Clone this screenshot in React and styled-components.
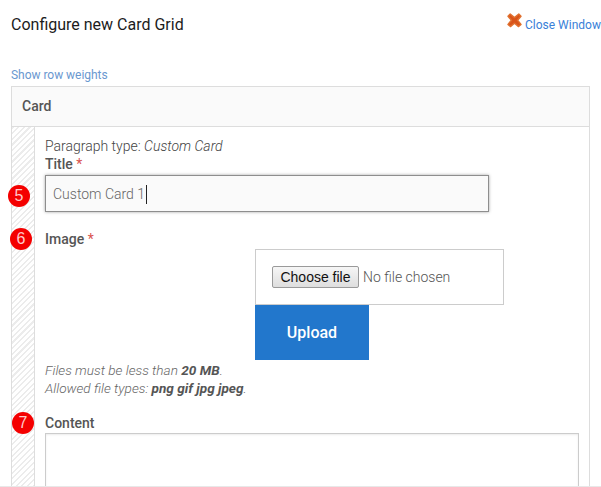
import styled, { createGlobalStyle } from 'styled-components';

const Global = createGlobalStyle`
  html, body {
    margin: 0;
    height: 100%;
    overflow: hidden;
    background: #fff;
  }
  body {
    font-family: Roboto, "Liberation Sans", sans-serif;
    font-size: 14px;
    color: #555;
  }
`;

const Page = styled.div`
  position: relative;
  width: 601px;
  height: 487px;
  overflow: hidden;
  border-bottom: 1px solid #e8e8e8;
  box-sizing: border-box;
`;

const TitleBar = styled.div`
  display: flex;
  justify-content: space-between;
  padding: 15px 0 0 11px;
  height: 52px;
`;

const Heading = styled.h1`
  margin: 0;
  font-size: 16px;
  font-weight: 400;
  line-height: 20px;
  color: #1c1c1c;
`;

const CloseLink = styled.a`
  display: flex;
  align-items: flex-start;
  gap: 3px;
  width: 94px;
  white-space: nowrap;
  font-size: 12px;
  line-height: 18px;
  color: #3a7fd8;
  margin-top: -3px;

  svg {
    flex: none;
    margin-top: 1px;
  }
  span {
    margin-top: 4px;
  }
`;

const WeightsLink = styled.a`
  display: block;
  margin-left: 11px;
  font-size: 12px;
  line-height: 16px;
  height: 19px;
  letter-spacing: -0.03px;
  color: #6a98d0;
`;

const Card = styled.section`
  margin-left: 11px;
  width: 579px;
  height: 420px;
  box-sizing: border-box;
  border: 1px solid #ddd;
  border-bottom: 0;
`;

const CardHeader = styled.div`
  height: 40px;
  box-sizing: border-box;
  padding-left: 10px;
  background: #fafafa;
  border-bottom: 1px solid #ddd;
  font-size: 14px;
  font-weight: 500;
  line-height: 38px;
  color: #555;
`;

const Row = styled.div`
  display: flex;
  height: 380px;
`;

const Handle = styled.div`
  flex: none;
  width: 22px;
  border-right: 1px solid #ddd;
  background: repeating-linear-gradient(
    135deg,
    #ececec 0 1.5px,
    #fff 1.5px 4px
  );
`;

const Body = styled.div`
  flex: 1;
  padding: 10px 0 0 10px;
`;

const TypeLine = styled.div`
  font-size: 14px;
  line-height: 18px;
  font-weight: 300;
  color: #444;

  em {
    font-style: italic;
  }
`;

const Label = styled.label`
  display: block;
  font-size: 14px;
  font-weight: 500;
  line-height: 18px;
  color: #555;

  i {
    font-style: normal;
    color: #d9534f;
    font-weight: 400;
  }
`;

const TitleInput = styled.div`
  margin-top: 2px;
  width: 444px;
  height: 37px;
  box-sizing: border-box;
  padding: 2px 0 0 7px;
  background: #fafafa;
  border: 1px solid #8e8e8e;
  box-shadow: 0 0 3px rgba(0, 0, 0, 0.35);
  font-size: 14px;
  font-weight: 300;
  line-height: 33px;
  color: #666;
  display: flex;
  align-items: center;
`;

const Caret = styled.span`
  display: inline-block;
  width: 1px;
  height: 19px;
  margin-left: 1px;
  background: #222;
`;

const ImageField = styled.div`
  margin-top: 18px;
`;

const Uploader = styled.div`
  margin: 1px 0 0 210px;
  width: 249px;
`;

const FileBox = styled.div`
  display: flex;
  align-items: center;
  height: 56px;
  box-sizing: border-box;
  padding-left: 16px;
  border: 1px solid #ccc;
  font-size: 14px;
  font-weight: 300;
  color: #555;
`;

const ChooseButton = styled.button`
  width: 87px;
  height: 22px;
  padding: 0;
  margin-right: 4px;
  font-family: "Liberation Sans", Arial, sans-serif;
  font-size: 14px;
  color: #111;
  background: linear-gradient(#f6f6f6, #dedede);
  border: 1px solid #9a9a9a;
  border-radius: 2px;
`;

const UploadButton = styled.button`
  display: block;
  width: 114px;
  height: 55px;
  padding: 0;
  border: 0;
  background: #2277cc;
  color: #fff;
  font-family: Roboto, sans-serif;
  font-size: 16px;
  font-weight: 500;
`;

const Help = styled.p`
  margin: 0;
  font-size: 13.6px;
  line-height: 18px;
  font-style: italic;
  font-weight: 300;
  color: #666;

  b {
    font-weight: 700;
    color: #555;
  }
`;

const HelpBlock = styled.div`
  margin-top: 1px;
`;

const ContentField = styled.div`
  margin-top: 17px;
`;

const TextArea = styled.div`
  margin-top: 1px;
  width: 534px;
  height: 80px;
  box-sizing: border-box;
  border: 1px solid #ccc;
  border-bottom: 0;
  box-shadow: inset 0 1px 2px rgba(0, 0, 0, 0.08);
`;

const Step = styled.span`
  position: absolute;
  left: ${(props) => props.$x}px;
  top: ${(props) => props.$y}px;
  width: 22px;
  height: 22px;
  border-radius: 50%;
  background: #f40000;
  color: #ffc9c9;
  font-family: "Liberation Sans", Arial, sans-serif;
  font-size: 16px;
  line-height: 22px;
  text-align: center;
`;

const CloseIcon = () => (
  <svg width="15" height="15" viewBox="0 0 15 15">
    <path
      d="M1 3.2 3.2 1 7.5 4.6 11.8 1 14 3.2 10.6 7.2 14 11.4 11.6 13.6 7.5 10.2 3.4 13.6 1 11.4 4.4 7.2Z"
      fill="#d9541a"
      stroke="#e0702e"
      strokeWidth="1.4"
      strokeLinejoin="round"
    />
  </svg>
);

export default function App() {
  return (
    <Page>
      <Global />
      <TitleBar>
        <Heading>Configure new Card Grid</Heading>
        <CloseLink>
          <CloseIcon />
          <span>Close Window</span>
        </CloseLink>
      </TitleBar>
      <WeightsLink>Show row weights</WeightsLink>
      <Card>
        <CardHeader>Card</CardHeader>
        <Row>
          <Handle />
          <Body>
            <TypeLine>
              Paragraph type: <em>Custom Card</em>
            </TypeLine>
            <Label>
              Title <i>*</i>
            </Label>
            <TitleInput>
              Custom Card 1
              <Caret />
            </TitleInput>
            <ImageField>
              <Label>
                Image <i>*</i>
              </Label>
              <Uploader>
                <FileBox>
                  <ChooseButton>Choose file</ChooseButton>
                  No file chosen
                </FileBox>
                <UploadButton>Upload</UploadButton>
              </Uploader>
              <HelpBlock>
                <Help>
                  Files must be less than <b>20 MB</b>.
                </Help>
                <Help>
                  Allowed file types: <b>png gif jpg jpeg</b>.
                </Help>
              </HelpBlock>
            </ImageField>
            <ContentField>
              <Label>Content</Label>
              <TextArea />
            </ContentField>
          </Body>
        </Row>
      </Card>
      <Step $x={8} $y={185}>5</Step>
      <Step $x={10} $y={228}>6</Step>
      <Step $x={12} $y={412}>7</Step>
    </Page>
  );
}
